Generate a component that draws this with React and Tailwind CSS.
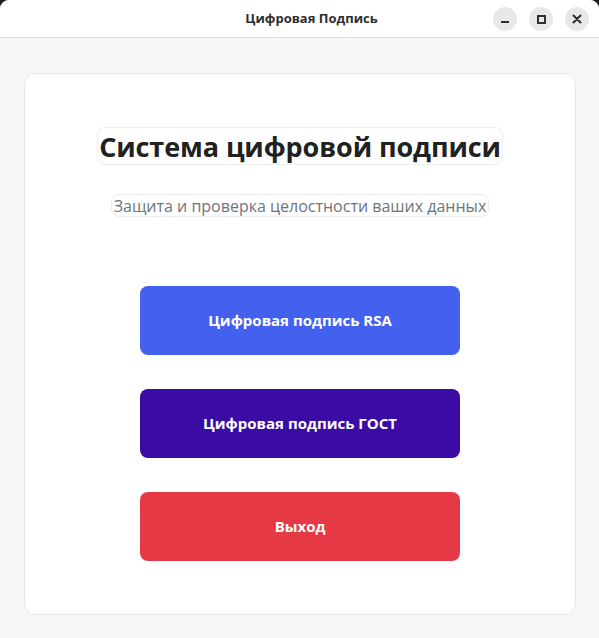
export default function App() {
  const font = { fontFamily: '"Open Sans", "Noto Sans", sans-serif' };
  return (
    <div className="w-[599px] h-[638px] bg-[#1e1e1e] overflow-hidden" style={font}>
      <div className="w-full h-full flex flex-col bg-[#f6f7f9] rounded-t-[9px] overflow-hidden">
        <div className="h-[38px] shrink-0 bg-white border-b border-[#dcdcdf] flex items-center relative">
          <div className="flex-1 text-center text-[13px] font-bold text-[#2e2e2e] pl-[24px]">Цифровая Подпись</div>
          <div className="absolute right-[10px] top-[7px] flex gap-[12px]">
            <div className="w-[24px] h-[24px] rounded-full bg-[#e8e8e8] flex items-center justify-center">
              <div className="w-[8px] h-[2px] bg-[#2e2e2e] mt-[6px]" />
            </div>
            <div className="w-[24px] h-[24px] rounded-full bg-[#e8e8e8] flex items-center justify-center">
              <div className="w-[9px] h-[9px] border-2 border-[#2e2e2e]" />
            </div>
            <div className="w-[24px] h-[24px] rounded-full bg-[#e8e8e8] flex items-center justify-center">
              <svg width="10" height="10" viewBox="0 0 10 10">
                <path d="M1.5 1.5L8.5 8.5M8.5 1.5L1.5 8.5" stroke="#2e2e2e" strokeWidth="2" strokeLinecap="round" />
              </svg>
            </div>
          </div>
        </div>
        <div className="flex-1 pt-[35px] pl-[24px] pr-[23px] pb-[23px] flex">
          <div className="flex-1 bg-white border border-[#e4e6ea] rounded-[12px] flex flex-col items-center pt-[53px]">
            <h1 className="px-[1px] h-[38px] flex items-center text-[27px] font-bold text-[#212121] border border-[#ebedf0] rounded-[8px] leading-none tracking-[-0.1px]">
              Система цифровой подписи
            </h1>
            <p className="mt-[29px] h-[23px] px-[2px] flex items-center text-[16px] text-[#6c757d] border border-[#ebedf0] rounded-[8px] leading-none">
              Защита и проверка целостности ваших данных
            </p>
            <div className="mt-[69px] flex flex-col gap-[34px]">
              <button className="w-[320px] h-[69px] rounded-[8px] bg-[#4361ee] text-white text-[15px] font-bold">
                Цифровая подпись RSA
              </button>
              <button className="w-[320px] h-[69px] rounded-[8px] bg-[#3a0ca3] text-white text-[15px] font-bold">
                Цифровая подпись ГОСТ
              </button>
              <button className="w-[320px] h-[69px] rounded-[8px] bg-[#e63946] text-white text-[15px] font-bold">
                Выход
              </button>
            </div>
          </div>
        </div>
      </div>
    </div>
  );
}
